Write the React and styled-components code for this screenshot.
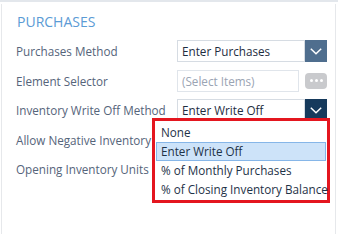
import React from "react";
import styled, { createGlobalStyle } from "styled-components";

const Global = createGlobalStyle`
  html, body { margin: 0; padding: 0; background: #fff; }
  body { font-family: "Open Sans", "Liberation Sans", sans-serif; }
`;

const Frame = styled.div`
  width: 338px;
  height: 234px;
  box-sizing: border-box;
  border-top: 2px solid #e3e7ec;
  padding-top: 2px;
  overflow: hidden;
`;

const Panel = styled.div`
  margin: 0 2px 0 1px;
  height: 230px;
  box-sizing: border-box;
  border-left: 1px solid #e6e8eb;
  border-right: 1px solid #e6e8eb;
  padding: 8px 0 0 14px;
`;

const Heading = styled.h2`
  margin: 0 0 9px 1px;
  font-size: 14px;
  line-height: 19px;
  font-weight: 400;
  color: #5b9bd5;
`;

const Form = styled.div`
  display: grid;
  grid-template-columns: 161px 150px;
  grid-auto-rows: 22px;
  row-gap: 7.5px;
`;

const Label = styled.div`
  font-size: 11.7px;
  line-height: 22px;
  color: #55647a;
  white-space: nowrap;
`;

const Control = styled.div`
  position: relative;
  display: flex;
  align-items: center;
`;

const Field = styled.div`
  box-sizing: border-box;
  height: 22px;
  width: ${(p) => (p.$narrow ? "122px" : "128px")};
  border: 1px solid ${(p) => (p.$narrow ? "#e0e5eb" : "#d6dce3")};
  background: #fff;
  padding-left: 4px;
  font-size: 11.7px;
  line-height: 20px;
  color: ${(p) => (p.$placeholder ? "#9aa4b3" : "#1e2d3f")};
  white-space: nowrap;
`;

const Toggle = styled.div`
  width: 22px;
  height: 22px;
  background: ${(p) => (p.$active ? "#163a5c" : "#4f6e8e")};
  display: flex;
  align-items: center;
  justify-content: center;
`;

const MoreButton = styled.div`
  margin-left: 6px;
  width: 22px;
  height: 16px;
  border-radius: 4px;
  background: #c9cacd;
  display: flex;
  align-items: center;
  justify-content: center;
  gap: 2px;
`;

const Dot = styled.span`
  width: 3px;
  height: 3px;
  border-radius: 50%;
  background: #fff;
`;

const Menu = styled.div`
  position: absolute;
  top: 19px;
  left: -25px;
  width: 178px;
  box-sizing: border-box;
  border: 3px solid #e4161f;
  background: #fff;
  padding: 2px 0 1px;
  z-index: 5;
`;

const Option = styled.div`
  height: 19px;
  box-sizing: border-box;
  margin: 0 1px;
  padding-left: 4px;
  border: 1px solid ${(p) => (p.$selected ? "#86b6e8" : "transparent")};
  background: ${(p) => (p.$selected ? "#cde3f9" : "transparent")};
  font-size: 11.7px;
  line-height: 17px;
  color: #1e3247;
  white-space: nowrap;
`;

const Chevron = () => (
  <svg width="12" height="7" viewBox="0 0 12 7" fill="none">
    <path d="M0.8 0.8 L6 5.8 L11.2 0.8" stroke="#fff" strokeWidth="1.5" />
  </svg>
);

const options = [
  "None",
  "Enter Write Off",
  "% of Monthly Purchases",
  "% of Closing Inventory Balance",
];

export default function App() {
  return (
    <>
      <Global />
      <Frame>
        <Panel>
          <Heading>PURCHASES</Heading>
          <Form>
            <Label>Purchases Method</Label>
            <Control>
              <Field>Enter Purchases</Field>
              <Toggle>
                <Chevron />
              </Toggle>
            </Control>

            <Label>Element Selector</Label>
            <Control>
              <Field $narrow $placeholder>
                (Select Items)
              </Field>
              <MoreButton>
                <Dot />
                <Dot />
                <Dot />
              </MoreButton>
            </Control>

            <Label>Inventory Write Off Method</Label>
            <Control>
              <Field>Enter Write Off</Field>
              <Toggle $active>
                <Chevron />
              </Toggle>
              <Menu>
                {options.map((o) => (
                  <Option key={o} $selected={o === "Enter Write Off"}>
                    {o}
                  </Option>
                ))}
              </Menu>
            </Control>

            <Label>Allow Negative Inventory</Label>
            <Control />

            <Label>Opening Inventory Units</Label>
            <Control />
          </Form>
        </Panel>
      </Frame>
    </>
  );
}
